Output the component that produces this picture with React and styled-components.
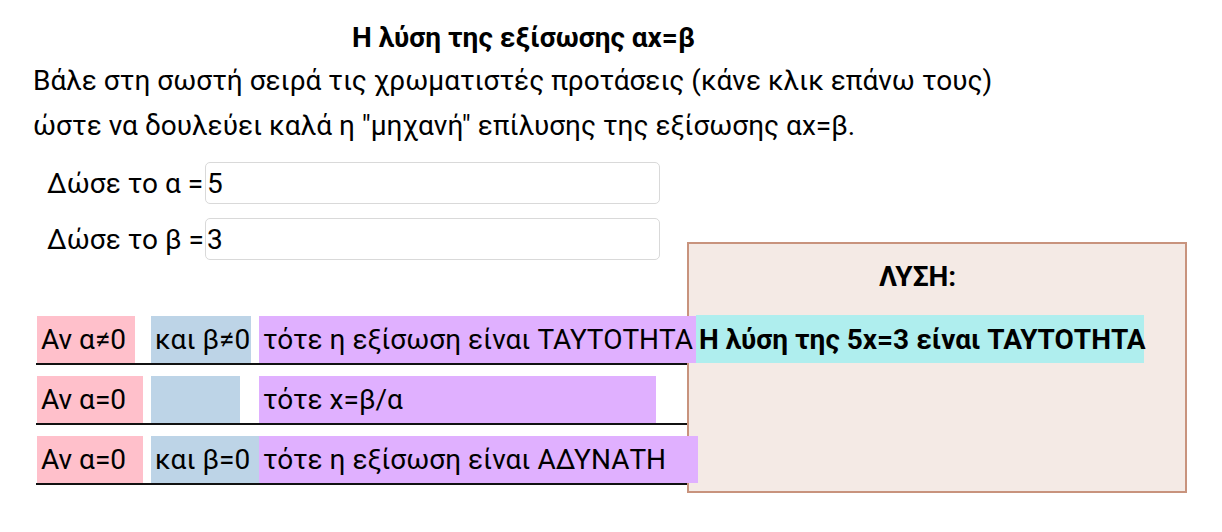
import React from "react";
import styled, { createGlobalStyle } from "styled-components";

const Global = createGlobalStyle`
  html, body { margin: 0; padding: 0; background: #fff; }
  body { font-family: Roboto, "Noto Sans", sans-serif; color: #000; }
  * { box-sizing: border-box; }
`;

const Page = styled.div`
  width: 1222px;
  height: 532px;
  overflow: hidden;
  padding-top: 21px;
`;

const Title = styled.h1`
  margin: 0 0 0 352px;
  font-size: 28px;
  line-height: 34px;
  font-weight: 700;
`;

const Intro = styled.p`
  margin: 3px 0 0 33px;
  font-size: 28px;
  line-height: 45px;
`;

const Main = styled.div`
  display: flex;
  align-items: flex-start;
  margin: 14px 0 0 36px;
`;

const LeftColumn = styled.div`
  width: 651px;
  display: flex;
  flex-direction: column;
`;

const Fields = styled.div`
  display: flex;
  flex-direction: column;
  gap: 14px;
  padding-left: 11px;
`;

const Field = styled.label`
  display: flex;
  align-items: center;
  font-size: 28px;
`;

const FieldLabel = styled.span`
  width: 158px;
  white-space: nowrap;
`;

const Input = styled.input`
  width: 455px;
  height: 42px;
  border: 1px solid #d9d9d9;
  border-radius: 5px;
  padding: 0 1px;
  font-family: Roboto, sans-serif;
  font-size: 28px;
  color: #000;
  background: #fff;
  outline: none;
`;

const Rows = styled.div`
  display: flex;
  flex-direction: column;
  gap: 11px;
  margin-top: 56px;
  position: relative;
  z-index: 1;
`;

const Row = styled.div`
  display: grid;
  grid-template-columns: 114px 108px auto;
  align-items: stretch;
  height: 49px;
  border-bottom: 2px solid #111;
  padding-left: 1px;
`;

const Chip = styled.div`
  width: ${(p) => p.$w}px;
  height: 47px;
  display: flex;
  align-items: center;
  padding-left: 4px;
  font-size: 28px;
  white-space: nowrap;
  background: ${(p) => p.$bg};
`;

const Panel = styled.div`
  width: 500px;
  height: 251px;
  margin-top: 80px;
  background: #f4eae5;
  border: 2px solid #c8937d;
  display: flex;
  flex-direction: column;
`;

const PanelTitle = styled.div`
  margin: 16px 0 0 190px;
  font-size: 28px;
  line-height: 34px;
  font-weight: 700;
`;

const Solution = styled.div`
  margin: 21px 0 0 7px;
  width: 448px;
  height: 48px;
  display: flex;
  align-items: center;
  padding-left: 3px;
  background: #afeeee;
  font-size: 28px;
  font-weight: 700;
  white-space: nowrap;
`;

const PINK = "#ffc0cb";
const BLUE = "#bdd4e7";
const PURPLE = "#e0b0ff";

const rows = [
  [
    { w: 98, bg: PINK, t: "Αν α≠0" },
    { w: 100, bg: BLUE, t: "και β≠0" },
    { w: 437, bg: PURPLE, t: "τότε η εξίσωση είναι ΤΑΥΤΟΤΗΤΑ" },
  ],
  [
    { w: 106, bg: PINK, t: "Αν α=0" },
    { w: 89, bg: BLUE, t: "" },
    { w: 397, bg: PURPLE, t: "τότε x=β/α" },
  ],
  [
    { w: 106, bg: PINK, t: "Αν α=0" },
    { w: 108, bg: BLUE, t: "και β=0" },
    { w: 439, bg: PURPLE, t: "τότε η εξίσωση είναι ΑΔΥΝΑΤΗ" },
  ],
];

export default function App() {
  return (
    <Page>
      <Global />
      <Title>Η λύση της εξίσωσης αx=β</Title>
      <Intro>
        Βάλε στη σωστή σειρά τις χρωματιστές προτάσεις (κάνε κλικ επάνω τους)
        <br />
        ώστε να δουλεύει καλά η "μηχανή" επίλυσης της εξίσωσης αx=β.
      </Intro>
      <Main>
        <LeftColumn>
          <Fields>
            <Field>
              <FieldLabel>Δώσε το α =</FieldLabel>
              <Input defaultValue="5" />
            </Field>
            <Field>
              <FieldLabel>Δώσε το β =</FieldLabel>
              <Input defaultValue="3" />
            </Field>
          </Fields>
          <Rows>
            {rows.map((r, i) => (
              <Row key={i}>
                {r.map((c, j) => (
                  <Chip key={j} $w={c.w} $bg={c.bg}>
                    {c.t}
                  </Chip>
                ))}
              </Row>
            ))}
          </Rows>
        </LeftColumn>
        <Panel>
          <PanelTitle>ΛΥΣΗ:</PanelTitle>
          <Solution>Η λύση της 5x=3 είναι ΤΑΥΤΟΤΗΤΑ</Solution>
        </Panel>
      </Main>
    </Page>
  );
}
